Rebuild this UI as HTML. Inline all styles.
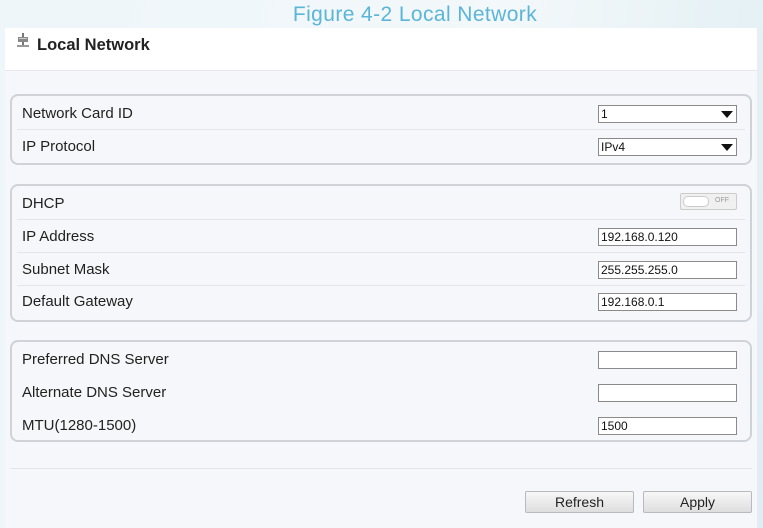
<!DOCTYPE html>
<html><head><style>
*{margin:0;padding:0;box-sizing:border-box}
body{width:763px;height:528px;overflow:hidden;background:linear-gradient(100deg,#eef6f9 0%,#f3f8fa 60%,#dfeef3 100%);font-family:"Liberation Sans",sans-serif;position:relative}
.title{position:absolute;left:0;width:830px;top:3px;text-align:center;color:#5bb5d8;font-size:21px;letter-spacing:0.4px}
.panel{position:absolute;left:5px;top:28px;width:752px;height:500px;background:#f5f7fa}
.hdr{position:absolute;left:0;top:0;width:752px;height:43px;background:#fff;border-bottom:1px solid #e6e8eb}
.hdr span{position:absolute;left:32px;top:8px;font-weight:bold;font-size:16.5px;color:#222}
.box{position:absolute;left:5px;width:742px;border:2px solid #cfd2d6;border-radius:8px;background:#f5f7fa}
.row{position:absolute;left:5px;right:5px;height:33px;border-bottom:1px solid #e3e5e8}
.row.last{border-bottom:none}
.row span{position:absolute;left:5px;top:8px;font-size:15px;color:#222}
.inp{position:absolute;left:581px;top:8px;width:139px;height:18px;border:1px solid #8a8a8a;background:#fff;font-size:12px;padding-left:2px;line-height:16px;color:#111}
.sel:after{content:"";position:absolute;right:3px;top:5px;border-left:6px solid transparent;border-right:6px solid transparent;border-top:7px solid #111}
.tog{position:absolute;left:663px;top:6px;width:57px;height:17px;border:1px solid #ccc;background:#f0f0f0;border-radius:2px}
.tog i{position:absolute;left:2px;top:2px;width:26px;height:11px;background:#fff;border:1px solid #ccc;border-radius:5px}
.tog b{position:absolute;left:34px;top:3px;font-size:7px;color:#999;font-weight:normal}
.btn{position:absolute;top:463px;height:22px;border:1px solid #b8babd;border-radius:2px;background:linear-gradient(#f7f7f7,#dedede);text-align:center;font-size:14px;line-height:20px;color:#222}
</style></head><body>
<div class="title">Figure 4-2 Local Network</div>
<div class="panel">
 <div class="hdr">
  <svg style="position:absolute;left:11px;top:5px" width="14" height="16" viewBox="0 0 14 16"><rect x="6" y="0" width="2" height="4" fill="#777"/><rect x="2" y="4" width="10" height="5" fill="#888"/><rect x="3" y="5" width="8" height="1" fill="#ccc"/><rect x="6" y="9" width="2" height="3" fill="#777"/><rect x="1" y="12" width="12" height="2" fill="#999"/></svg>
  <span>Local Network</span></div>
 <div class="box" style="top:66px;height:71px">
  <div class="row" style="top:1px"><span>Network Card ID</span><div class="inp sel">1</div></div>
  <div class="row last" style="top:34px"><span>IP Protocol</span><div class="inp sel">IPv4</div></div>
 </div>
 <div class="box" style="top:156px;height:138px">
  <div class="row" style="top:1px"><span>DHCP</span><div class="tog"><i></i><b>OFF</b></div></div>
  <div class="row" style="top:34px"><span>IP Address</span><div class="inp">192.168.0.120</div></div>
  <div class="row" style="top:67px"><span>Subnet Mask</span><div class="inp">255.255.255.0</div></div>
  <div class="row last" style="top:99px"><span>Default Gateway</span><div class="inp">192.168.0.1</div></div>
 </div>
 <div class="box" style="top:312px;height:102px">
  <div class="row last" style="top:1px"><span>Preferred DNS Server</span><div class="inp"></div></div>
  <div class="row last" style="top:34px"><span>Alternate DNS Server</span><div class="inp"></div></div>
  <div class="row last" style="top:67px"><span>MTU(1280-1500)</span><div class="inp">1500</div></div>
 </div>
 <div style="position:absolute;left:5px;width:742px;top:440px;border-top:1px solid #e3e5e8"></div>
 <div class="btn" style="left:520px;width:109px">Refresh</div>
 <div class="btn" style="left:638px;width:109px">Apply</div>
</div>
</body></html>
